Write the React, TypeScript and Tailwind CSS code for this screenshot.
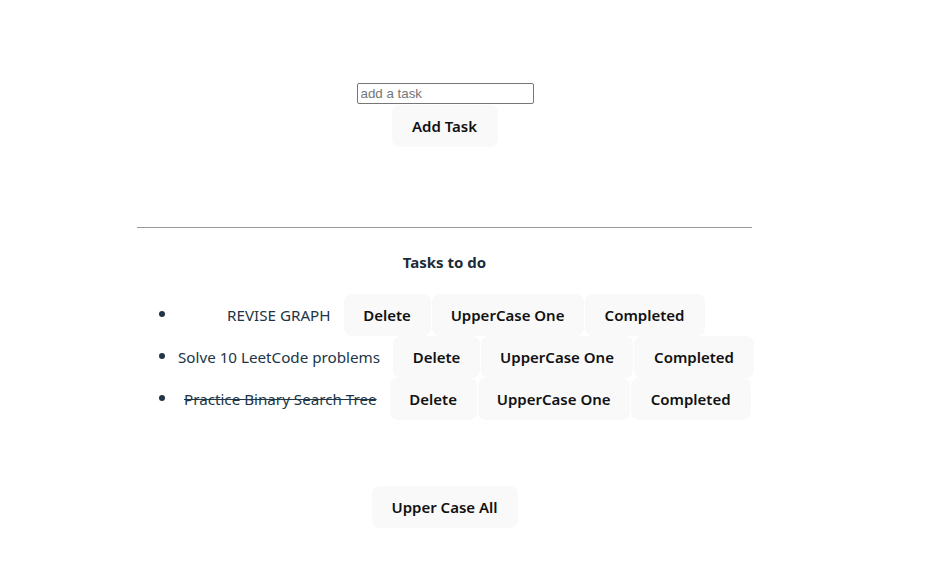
import React from 'react';

const font = { fontFamily: '"Noto Sans", "Open Sans", Arial, sans-serif' };

const tasks = [
  { text: 'REVISE GRAPH', pad: 'pl-[50px]', done: false },
  { text: 'Solve 10 LeetCode problems', pad: 'pl-px', done: false },
  { text: 'Practice Binary Search Tree', pad: 'pl-[7px]', done: true },
];

const btn =
  'shrink-0 whitespace-nowrap h-[42px] rounded-lg bg-[#f9f9f9] text-[15px] leading-6 font-semibold text-[#111] flex items-center justify-center';

const App = () => {
  return (
    <div className="min-h-[584px] w-full bg-white text-[#213547]" style={font}>
      <div className="ml-[137px] w-[615px] pt-[83px]">
        <div className="flex flex-col items-center">
          <input
            type="text"
            placeholder="add a task"
            className="ml-px h-[21px] w-[177px] rounded-[2px] border border-[#767676] px-[3px] text-[13.33px] text-black placeholder:text-[#757575]"
            style={{ fontFamily: 'Arial, "Liberation Sans", sans-serif' }}
          />
          <button className={`${btn} mt-px w-[106px] h-[41px]`}>Add Task</button>
        </div>

        <hr className="mt-[80px] border-t border-[#9a9a9a]" />

        <h2 className="mt-[22px] text-center text-[15px] font-bold leading-6 text-[#1b2b3a]">Tasks to do</h2>

        <ul className="mt-[18px] pl-10">
          {tasks.map((t) => (
            <li key={t.text} className="list-disc h-[42px] leading-[42px] marker:text-[#213547]">
              <div className="inline-flex items-center h-[42px] align-middle whitespace-nowrap">
                <span className={`${t.pad} shrink-0 text-[15.2px] leading-6 ${t.done ? 'line-through' : ''}`}>{t.text}</span>
                <button className={`${btn} ml-[13px] w-[87px]`}>Delete</button>
                <button className={`${btn} ml-px w-[152px]`}>UpperCase One</button>
                <button className={`${btn} ml-px w-[120px]`}>Completed</button>
              </div>
            </li>
          ))}
        </ul>

        <div className="mt-[68px] flex justify-center">
          <button className={`${btn} w-[146px] h-[41px]`}>Upper Case All</button>
        </div>
      </div>
    </div>
  );
};

export default App;
